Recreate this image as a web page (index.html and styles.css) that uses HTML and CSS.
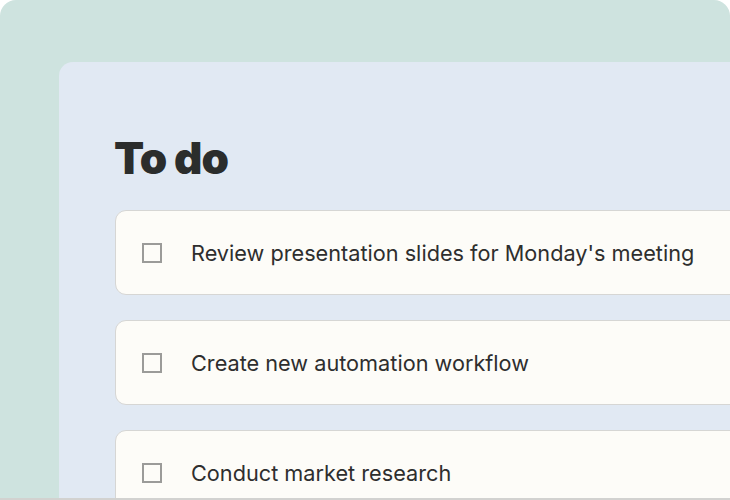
FILE: index.html
```html
<!DOCTYPE html>
<html>
<head>
<meta charset="utf-8">
<link rel="stylesheet" href="styles.css">
</head>
<body>
<div class="frame">
  <div class="panel">
    <h1 class="title">To do</h1>
    <div class="list">
      <div class="card"><span class="box"></span><span class="label">Review presentation slides for Monday's meeting</span></div>
      <div class="card"><span class="box"></span><span class="label">Create new automation workflow</span></div>
      <div class="card"><span class="box"></span><span class="label">Conduct market research</span></div>
    </div>
  </div>
</div>
</body>
</html>
```
FILE: styles.css
```css
html, body {
  margin: 0;
  padding: 0;
  background: #ffffff;
  overflow: hidden;
}
.frame {
  box-sizing: border-box;
  width: 730px;
  height: 500px;
  background: #cee3df;
  border-radius: 16px 16px 0 0;
  padding: 62px 0 0 59px;
  border-bottom: 2px solid #d2d2d0;
  overflow: hidden;
  font-family: Inter, "Liberation Sans", sans-serif;
}
.panel {
  background: #e1e9f3;
  border-radius: 14px 0 0 0;
  height: 100%;
  padding: 70px 0 0 55px;
  box-sizing: border-box;
}
.title {
  margin: 0;
  font-size: 44px;
  line-height: 52px;
  font-weight: 900;
  color: #2b2d2c;
  letter-spacing: -1px;
}
.list {
  margin-top: 26px;
  margin-left: 1px;
  display: flex;
  flex-direction: column;
  gap: 25px;
  margin-right: -30px;
}
.card {
  box-sizing: border-box;
  height: 85px;
  background: #fdfcf8;
  border: 1px solid #d6d6d4;
  border-radius: 11px;
  display: flex;
  align-items: center;
  padding-left: 26px;
}
.box {
  box-sizing: border-box;
  width: 20px;
  height: 20px;
  border: 2px solid #9b9b99;
  flex: none;
  margin-right: 29px;
}
.label {
  font-size: 21.7px;
  color: #2e2e2e;
  white-space: nowrap;
}
```
